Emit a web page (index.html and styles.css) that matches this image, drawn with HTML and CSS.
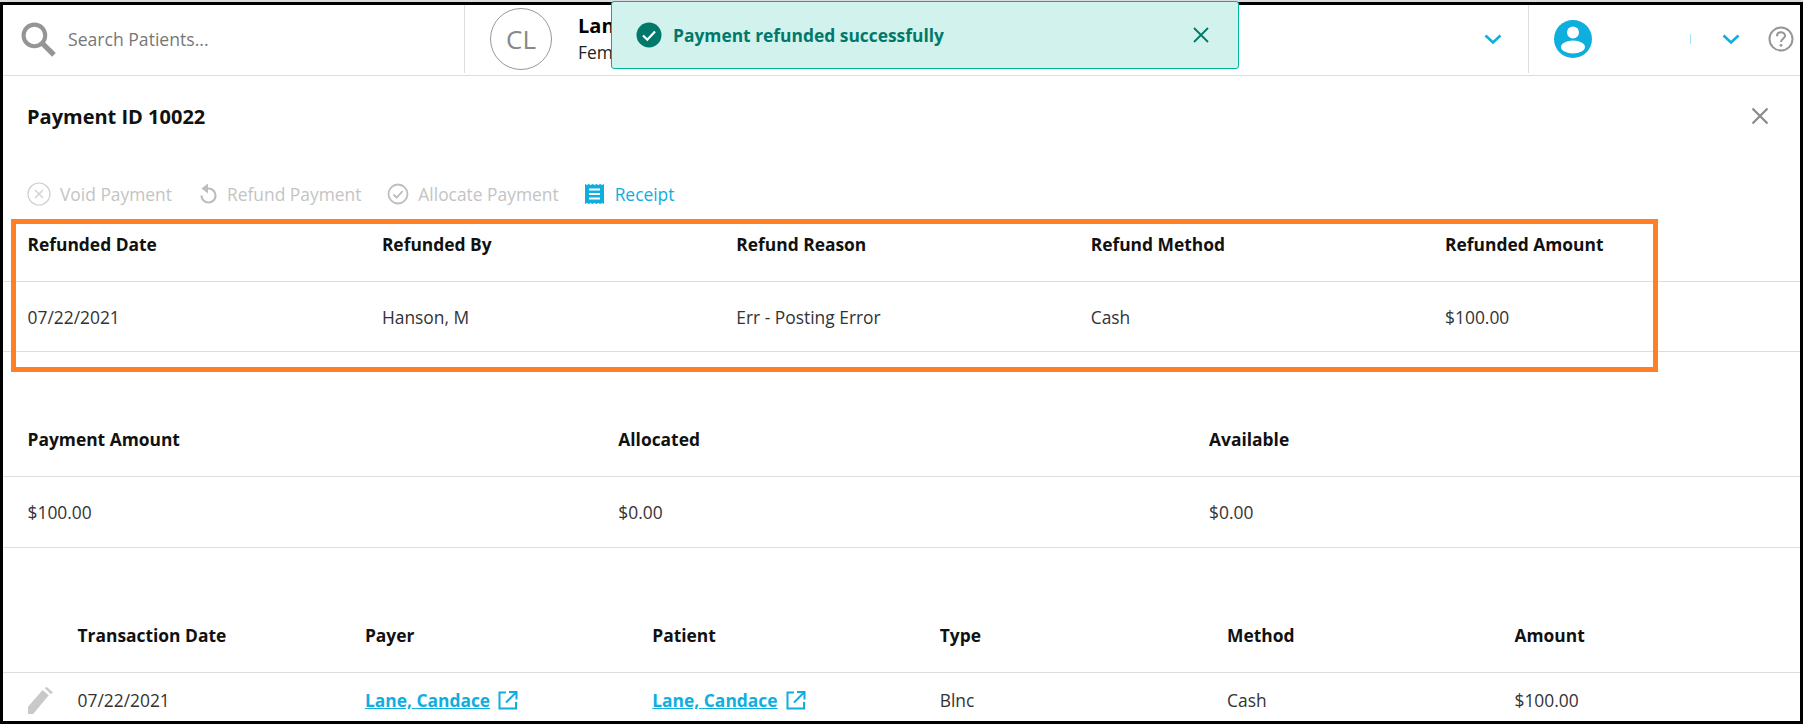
FILE: index.html
```html
<!DOCTYPE html>
<html lang="en">
<head>
    <meta charset="UTF-8">
    <meta name="viewport" content="width=device-width, initial-scale=1.0">
    <title>Payment ID 10022</title>
    <link rel="stylesheet" href="styles.css">
</head>
<body>
<div class="frame">

    <header class="topbar">
        <div class="search">
            <svg class="search-icon" width="35" height="35" viewBox="0 0 34 34"><circle cx="13" cy="13" r="10.500" fill="none" stroke="#959595" stroke-width="4"/><path d="M20.500 20.500L32 32" stroke="#959595" stroke-width="5" fill="none"/></svg>
            <span>Search Patients...</span>
        </div>
        <div class="patient">
            <div class="avatar">CL</div>
            <div class="patient-text">
                <strong>Lane, Candace</strong>
                <span>Female</span>
            </div>
            <svg class="chev patient-chev" width="18" height="11" viewBox="0 0 18 11"><path d="M1.500 1.500L9 8.500l7.500-7" fill="none" stroke="#0eaedf" stroke-width="2.600"/></svg>
        </div>
        <div class="user">
            <svg width="38" height="38" viewBox="0 0 38 38"><circle cx="19" cy="19" r="19" fill="#0eaedf"/><circle cx="19" cy="12.500" r="6" fill="#fff"/><ellipse cx="19" cy="27" rx="12" ry="6.500" fill="#fff"/></svg>
            <span class="user-tick"></span>
            <svg class="chev" width="18" height="11" viewBox="0 0 18 11"><path d="M1.500 1.500L9 8.500l7.500-7" fill="none" stroke="#0eaedf" stroke-width="2.600"/></svg>
            <svg class="help" width="26" height="26" viewBox="0 0 26 26"><circle cx="13" cy="13" r="11.500" fill="none" stroke="#959595" stroke-width="2"/><path d="M9 10.200c0-2.500 1.800-4 4-4s4 1.400 4 3.500c0 3-4 3-4 6.200" fill="none" stroke="#959595" stroke-width="2"/><circle cx="13" cy="19.300" r="1.400" fill="#959595"/></svg>
        </div>
    </header>

    <div class="toast">
        <svg width="26" height="26" viewBox="0 0 26 26"><circle cx="13" cy="13" r="12.500" fill="#00796b"/><path d="M7 13.500l4.300 4.200L19 9.500" fill="none" stroke="#fff" stroke-width="2.200"/></svg>
        <span class="toast-text">Payment refunded successfully</span>
        <svg class="toast-close" width="16" height="16" viewBox="0 0 16 16"><path d="M1 1l14 14M15 1L1 15" stroke="#00796b" stroke-width="1.800" fill="none"/></svg>
    </div>

    <main>
        <div class="title-row">
            <h1>Payment ID 10022</h1>
            <svg width="18" height="18" viewBox="0 0 18 18"><path d="M1.500 1.500l15 15M16.500 1.500l-15 15" stroke="#8a8a8a" stroke-width="2.200" fill="none"/></svg>
        </div>

        <div class="actions">
            <span class="action">
                <svg width="24" height="24" viewBox="0 0 24 24"><circle cx="12" cy="12" r="11" fill="none" stroke="#cfcfcf" stroke-width="1.200"/><path d="M8 8l8 8M16 8l-8 8" stroke="#cfcfcf" stroke-width="1.200" fill="none"/></svg>
                Void Payment
            </span>
            <span class="action">
                <svg width="20" height="24" viewBox="0 0 20 24"><path d="M6 6.500h4.500a7 7 0 1 1-7 7" fill="none" stroke="#bdbdbd" stroke-width="2.200"/><path d="M10 1.500v10L3.500 6.500z" fill="#bdbdbd"/></svg>
                Refund Payment
            </span>
            <span class="action">
                <svg width="22" height="24" viewBox="0 0 22 24"><circle cx="11" cy="12" r="9.500" fill="none" stroke="#bdbdbd" stroke-width="1.800"/><path d="M6.500 12.500l3.200 3.200 6-6.700" fill="none" stroke="#bdbdbd" stroke-width="1.800"/></svg>
                Allocate Payment
            </span>
            <span class="action action-on">
                <svg width="19" height="20" viewBox="0 0 19 20"><path d="M0 0l1.900 1 1.900-1 1.900 1 1.900-1 1.900 1 1.900-1 1.900 1 1.900-1 1.900 1L19 0v20l-1.900-1-1.900 1-1.900-1-1.900 1-1.900-1-1.900 1-1.900-1-1.900 1-1.900-1L0 20z" fill="#0eaedf"/><path d="M4 5.500h11M4 10h11M4 14.500h11" stroke="#fff" stroke-width="2"/></svg>
                Receipt
            </span>
        </div>

        <section class="tbl cols-5">
            <div class="head">
                <span>Refunded Date</span><span>Refunded By</span><span>Refund Reason</span><span>Refund Method</span><span>Refunded Amount</span>
            </div>
            <div class="row">
                <span>07/22/2021</span><span>Hanson, M</span><span>Err - Posting Error</span><span>Cash</span><span>$100.00</span>
            </div>
        </section>

        <section class="tbl cols-3">
            <div class="head">
                <span>Payment Amount</span><span>Allocated</span><span>Available</span>
            </div>
            <div class="row">
                <span>$100.00</span><span>$0.00</span><span>$0.00</span>
            </div>
        </section>

        <section class="tbl cols-6">
            <div class="head">
                <span>Transaction Date</span><span>Payer</span><span>Patient</span><span>Type</span><span>Method</span><span>Amount</span>
            </div>
            <div class="row">
                <span class="date-cell">
                    <svg class="pencil" width="27" height="27" viewBox="0 0 26 26"><path d="M0 26v-7L14 3l6 5L5 26zM16 1l2-1 6 5-2 2z" fill="#c9c9c9"/></svg>
                    07/22/2021
                </span>
                <span><a href="#">Lane, Candace</a><svg class="ext" width="20" height="19" viewBox="0 0 20 19"><path d="M8 1.500H1.500v16H18V11M11 1h7.500v7.500M18 1.500L8 11.500" fill="none" stroke="#0eaedf" stroke-width="2"/></svg></span>
                <span><a href="#">Lane, Candace</a><svg class="ext" width="20" height="19" viewBox="0 0 20 19"><path d="M8 1.500H1.500v16H18V11M11 1h7.500v7.500M18 1.500L8 11.500" fill="none" stroke="#0eaedf" stroke-width="2"/></svg></span>
                <span>Blnc</span><span>Cash</span><span>$100.00</span>
            </div>
        </section>
    </main>

    <div class="callout"></div>
</div>
</body>
</html>
```

FILE: styles.css
```css
* {
    box-sizing: border-box;
}
html, body {
    margin: 0;
    height: 100%;
    overflow: hidden;
}
body {
    font-family: "Open Sans", Arial, sans-serif;
    font-size: 17.4px;
    color: #333;
    background: #d8dce0;
    padding-top: 2px;
}
.frame {
    position: relative;
    height: 722px;
    background: #fff;
    border: 3px solid #000;
}

/* top bar */
.topbar {
    display: flex;
    height: 71px;
    border-bottom: 1px solid #ddd;
}
.search {
    width: 462px;
    display: flex;
    align-items: center;
    gap: 12px;
    padding-left: 18px;
    border-right: 1px solid #ddd;
    color: #777;
    font-size: 17.6px;
    margin-bottom: 2px;
}
.patient {
    width: 1064px;
    display: flex;
    align-items: center;
    padding-left: 25px;
    border-right: 1px solid #ddd;
    margin-bottom: 2px;
}
.avatar {
    width: 62px;
    height: 62px;
    border: 1px solid #999;
    border-radius: 50%;
    display: flex;
    align-items: center;
    justify-content: center;
    font-size: 26px;
    color: #888;
}
.patient-text {
    display: flex;
    flex-direction: column;
    margin-left: 26px;
    line-height: 26px;
    color: #222;
}
.patient-text strong {
    font-size: 20px;
    color: #000;
}
.patient-chev {
    margin-left: auto;
    margin-right: 26px;
}
.user {
    flex: 1;
    display: flex;
    align-items: center;
    padding-left: 25px;
    margin-bottom: 2px;
}
.user-tick {
    width: 1px;
    height: 10px;
    margin-left: 98px;
    background: #a5e4f5;
}
.user .chev {
    margin-left: 31px;
}
.help {
    margin-left: 28px;
}

/* toast */
.toast {
    position: absolute;
    left: 608px;
    top: -4px;
    width: 628px;
    height: 68px;
    display: flex;
    align-items: center;
    padding: 0 29px 0 24px;
    background: #d2f2ed;
    border: 1px solid #00b39b;
    border-radius: 3px;
    color: #00796b;
}
.toast-text {
    margin-left: 11px;
    font-weight: 700;
}
.toast-close {
    margin-left: auto;
}

/* body */
.title-row {
    display: flex;
    align-items: center;
    justify-content: space-between;
    height: 80px;
    padding: 0 31px 0 24px;
}
h1 {
    margin: 0;
    font-size: 20px;
    font-weight: 700;
    color: #111;
}
.actions {
    display: flex;
    align-items: center;
    height: 64px;
    padding: 12px 0 0 24px;
    gap: 26px;
    color: #c4c4c4;
}
.action {
    display: flex;
    align-items: center;
    gap: 9px;
}
.action-on {
    color: #0eaedf;
    gap: 11px;
}

.tbl {
    width: 100%;
}
.head, .row {
    display: grid;
    padding-left: 24.5px;
}
.head {
    align-items: start;
    height: 62px;
    padding-top: 12px;
    font-weight: 700;
    color: #111;
    border-bottom: 1px solid #ddd;
}
.row {
    align-items: center;
    height: 70px;
    border-bottom: 1px solid #ddd;
}
.cols-5 .head, .cols-5 .row {
    grid-template-columns: repeat(5, 354.4px);
}
.cols-3 {
    margin-top: 63px;
}
.cols-3 .row {
    height: 71px;
}
.cols-3 .head, .cols-3 .row {
    grid-template-columns: repeat(3, 590.8px);
}
.cols-6 {
    margin-top: 63px;
}
.cols-6 .head, .cols-6 .row {
    padding-left: 74.5px;
    grid-template-columns: repeat(6, 287.4px);
}
.cols-6 .row {
    height: 53px;
    border-bottom: 0;
}
.date-cell {
    position: relative;
}
.pencil {
    position: absolute;
    left: -50px;
    top: -1px;
}
a {
    color: #0eaedf;
    font-weight: 700;
    text-decoration: underline;
}
.ext {
    margin-left: 8px;
    vertical-align: -3px;
}

/* orange highlight drawn over the first table */
.callout {
    position: absolute;
    left: 8px;
    top: 214px;
    width: 1647px;
    height: 153px;
    border: 5px solid #ff7f27;
}
```
